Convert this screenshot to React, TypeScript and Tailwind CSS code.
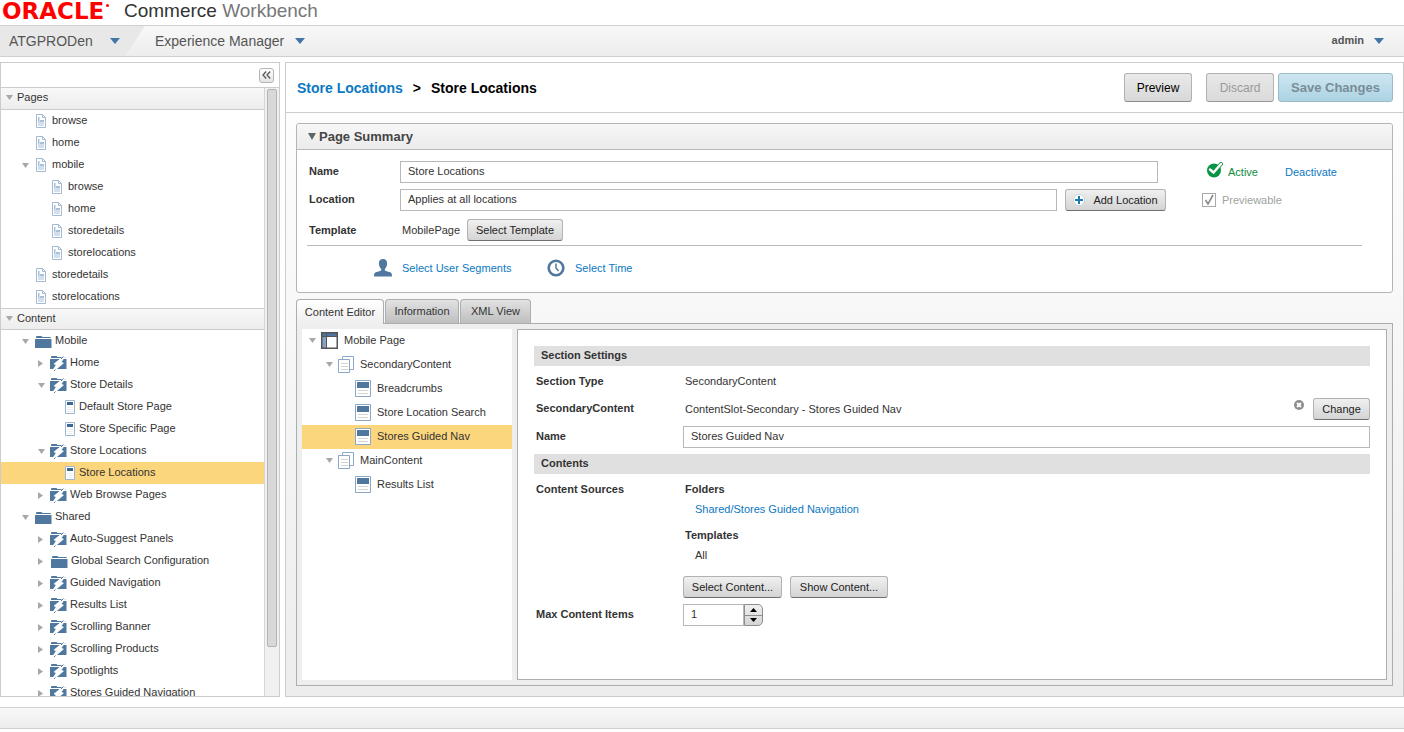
import { useState } from "react";
import type { ReactNode } from "react";
import clsx from "clsx";

type IconName = "page" | "folder" | "bolt" | "leaf" | "layout" | "stack" | "block";

type TreeNode = {
  id: string;
  label: string;
  icon: IconName;
  depth: number;
  arrow?: "open" | "closed";
};

// ===================== DATA =====================
const pages: TreeNode[] = [
  { id: "p1", label: "browse", icon: "page", depth: 1 },
  { id: "p2", label: "home", icon: "page", depth: 1 },
  { id: "p3", label: "mobile", icon: "page", depth: 1, arrow: "open" },
  { id: "p4", label: "browse", icon: "page", depth: 2 },
  { id: "p5", label: "home", icon: "page", depth: 2 },
  { id: "p6", label: "storedetails", icon: "page", depth: 2 },
  { id: "p7", label: "storelocations", icon: "page", depth: 2 },
  { id: "p8", label: "storedetails", icon: "page", depth: 1 },
  { id: "p9", label: "storelocations", icon: "page", depth: 1 },
];

const content: TreeNode[] = [
  { id: "c1", label: "Mobile", icon: "folder", depth: 1, arrow: "open" },
  { id: "c2", label: "Home", icon: "bolt", depth: 2, arrow: "closed" },
  { id: "c3", label: "Store Details", icon: "bolt", depth: 2, arrow: "open" },
  { id: "c4", label: "Default Store Page", icon: "leaf", depth: 3 },
  { id: "c5", label: "Store Specific Page", icon: "leaf", depth: 3 },
  { id: "c6", label: "Store Locations", icon: "bolt", depth: 2, arrow: "open" },
  { id: "c7", label: "Store Locations", icon: "leaf", depth: 3 },
  { id: "c8", label: "Web Browse Pages", icon: "bolt", depth: 2, arrow: "closed" },
  { id: "c9", label: "Shared", icon: "folder", depth: 1, arrow: "open" },
  { id: "c10", label: "Auto-Suggest Panels", icon: "bolt", depth: 2, arrow: "closed" },
  { id: "c11", label: "Global Search Configuration", icon: "folder", depth: 2, arrow: "closed" },
  { id: "c12", label: "Guided Navigation", icon: "bolt", depth: 2, arrow: "closed" },
  { id: "c13", label: "Results List", icon: "bolt", depth: 2, arrow: "closed" },
  { id: "c14", label: "Scrolling Banner", icon: "bolt", depth: 2, arrow: "closed" },
  { id: "c15", label: "Scrolling Products", icon: "bolt", depth: 2, arrow: "closed" },
  { id: "c16", label: "Spotlights", icon: "bolt", depth: 2, arrow: "closed" },
  { id: "c17", label: "Stores Guided Navigation", icon: "bolt", depth: 2, arrow: "closed" },
];

const sections: TreeNode[] = [
  { id: "s1", label: "Mobile Page", icon: "layout", depth: 0, arrow: "open" },
  { id: "s2", label: "SecondaryContent", icon: "stack", depth: 1, arrow: "open" },
  { id: "s3", label: "Breadcrumbs", icon: "block", depth: 2 },
  { id: "s4", label: "Store Location Search", icon: "block", depth: 2 },
  { id: "s5", label: "Stores Guided Nav", icon: "block", depth: 2 },
  { id: "s6", label: "MainContent", icon: "stack", depth: 1, arrow: "open" },
  { id: "s7", label: "Results List", icon: "block", depth: 2 },
];

// ===================== ICONS =====================
function Triangle({ dir = "down", className }: { dir?: "down" | "right" | "up"; className?: string }) {
  return (
    <svg viewBox="0 0 10 6" className={clsx("shrink-0 fill-current", className)} preserveAspectRatio="none">
      {dir === "down" && <path d="M0 0h10L5 6z" />}
      {dir === "up" && <path d="M0 6h10L5 0z" />}
      {dir === "right" && <path d="M0 0v6l10-3z" />}
    </svg>
  );
}

function NodeIcon({ name }: { name: IconName }) {
  switch (name) {
    case "page":
      return (
        <svg width="13" height="14" viewBox="0 0 13 14" className="shrink-0">
          <path d="M1.5.5h6l3 3v10h-9z" fill="#fff" stroke="#a3bbd4" />
          <path d="M7.500.5v3h3" fill="none" stroke="#a3bbd4" />
          <path d="M3 3h2v3h4v6H3z" fill="#d3dfeb" />
          <path d="M3 3h1v5H3zM5 6h4v2H5z" fill="#a9c0d8" />
        </svg>
      );
    case "folder":
      return (
        <svg width="17" height="14" viewBox="0 0 17 14" className="mt-0.5 -mr-px shrink-0" fill="#50789f">
          <path d="M1 3V2q0-1 1-1h4.500l1 1H15q1 0 1 1z" />
          <path d="M0 4h16.500v9H0z" />
        </svg>
      );
    case "bolt":
      return (
        <svg width="17" height="16" viewBox="0 0 17 16" className="-mr-px -ml-px shrink-0" fill="#50789f">
          <path d="M1 3V2q0-1 1-1h4.500l1 1H14l2 1z" />
          <path d="M0 4h16.500v10H0z" />
          <path d="M14 .5 3.500 9l2.300 1L2 16h2.500L14 8l-2.500-1 4-5.500z" fill="#fff" />
          <path d="M13.500 1.500 11 4M5.500 14.500 4 16" fill="none" stroke="#50789f" strokeWidth="1" />
          <path d="M8.500 5.500 10 5 9 8z" fill="#fff" />
        </svg>
      );
    case "leaf":
      return (
        <svg width="10" height="14" viewBox="0 0 10 14" className="shrink-0">
          <path d="M.5.5h9v13h-9z" fill="#fff" stroke="#9db5d0" />
          <path d="M2 2h6v3H2z" fill="#3d6792" />
          <path d="M2 7.500h6M2 9.500h6M2 11.500h6" stroke="#eceff3" />
        </svg>
      );
    case "layout":
      return (
        <svg width="17" height="17" viewBox="0 0 17 17" className="shrink-0">
          <path d="M1 1h15v15H1z" fill="#fff" />
          <path d="M1 1h15v3H1z" fill="#50789f" />
          <path d="M1 5h4v11H1z" fill="#86a3c4" />
          <path d="M1 4.500h15M5.500 1v15" stroke="#555" />
          <path d="M.750.750h15.500v15.500H.750z" fill="none" stroke="#555" strokeWidth="1.500" />
        </svg>
      );
    case "stack":
      return (
        <svg width="16" height="17" viewBox="0 0 16 17" className="shrink-0">
          <path d="M4.500.5h11v13h-11z" fill="#fff" stroke="#8ba8c8" />
          <path d="M.5 3.500h11v13H.5z" fill="#fff" stroke="#8ba8c8" />
          <path d="M3 7.500h7M3 10.500h7M3 13.500h7" stroke="#d3d3d3" />
        </svg>
      );
    case "block":
      return (
        <svg width="16" height="17" viewBox="0 0 16 17" className="shrink-0">
          <path d="M.5.5h15v16H.5z" fill="#fff" stroke="#8ba8c8" />
          <path d="M2 2h12v6H2z" fill="#50789f" />
          <path d="M3 10.500h10M3 13.500h10" stroke="#d3d3d3" />
        </svg>
      );
  }
}

// ===================== SMALL PARTS =====================
function GrayButton({ children, className }: { children: ReactNode; className?: string }) {
  return (
    <button
      type="button"
      className={clsx(
        "flex h-[22px] shrink-0 items-center justify-center rounded-[3px] border border-[#b2b2b2] border-b-[#6f6f6f] bg-linear-to-b from-[#f0f0f0] to-[#d4d4d4] text-[#222]",
        className,
      )}
    >
      {children}
    </button>
  );
}

function SectionHeader({ children, className }: { children: ReactNode; className?: string }) {
  return (
    <button
      type="button"
      className={clsx(
        "flex h-[22px] w-full shrink-0 items-center gap-1 border-b border-[#ccc] bg-linear-to-b from-[#f8f8f8] to-[#ededed] pb-0.5 pl-[5px] text-left",
        className,
      )}
    >
      <Triangle className="h-[5px] w-[7px] text-[#a8a8a8]" />
      {children}
    </button>
  );
}

const sidePad = ["pl-0", "pl-[21px]", "pl-[37px]", "pl-[51px]"];
const editorPad = ["pl-[7px]", "pl-6", "pl-[41px]"];

function Tree({
  nodes,
  selected,
  onSelect,
  wide,
}: {
  nodes: TreeNode[];
  selected: string;
  onSelect: (id: string) => void;
  wide?: boolean;
}) {
  return (
    <ul className="shrink-0">
      {nodes.map((node) => (
        <li key={node.id}>
          <button
            type="button"
            onClick={() => onSelect(node.id)}
            className={clsx(
              "flex w-full items-center whitespace-nowrap text-left",
              wide ? "h-6 pb-0.5" : "h-[22px]",
              wide ? editorPad[node.depth] : sidePad[node.depth],
              selected === node.id && "bg-[#fcd67d]",
            )}
          >
            <span className={clsx("shrink-0 text-[#a8a8a8]", wide ? "w-3" : "w-[13px]")}>
              {node.arrow === "open" && <Triangle className="h-[5px] w-[7px]" />}
              {node.arrow === "closed" && <Triangle dir="right" className="h-[7px] w-[5px]" />}
            </span>
            <NodeIcon name={node.icon} />
            <span className={wide ? "pl-1.5" : "pb-0.5 pl-1"}>{node.label}</span>
          </button>
        </li>
      ))}
    </ul>
  );
}

// ===================== HEADER =====================
function TopBar() {
  return (
    <>
      <header className="flex h-[25px] shrink-0 items-start pl-0.5">
        <span className="flex w-[122px] gap-0.5 font-['DejaVu_Sans',sans-serif] text-[23px] leading-[22px] font-bold text-[#f00]">
          ORACLE
          <i className="mt-1 size-[3px] rounded-full bg-[#f00]" />
        </span>
        <h1 className="text-[19px] leading-[22px] text-[#333]">
          Commerce <span className="text-[#777]">Workbench</span>
        </h1>
      </header>
      <nav className="flex h-8 shrink-0 items-center border-y border-[#d0d0d0] bg-linear-to-b from-[#f8f8f8] to-[#ededed] text-sm text-[#555]">
        <button
          type="button"
          className="flex h-full w-[145px] items-center gap-[17px] bg-[#e8e8e8] pl-[9px] [clip-path:polygon(0_0,100%_0,calc(100%-20px)_100%,0_100%)]"
        >
          ATGPRODen
          <Triangle className="h-1.5 w-2.5 text-[#4475a8]" />
        </button>
        <button type="button" className="flex items-center gap-[11px] pl-[10px]">
          Experience Manager
          <Triangle className="h-1.5 w-2.5 text-[#4475a8]" />
        </button>
        <button type="button" className="ml-auto flex items-center gap-2.5 pr-5 text-[11px] font-bold">
          admin
          <Triangle className="h-1.5 w-2.5 text-[#4475a8]" />
        </button>
      </nav>
    </>
  );
}

// ===================== SIDEBAR =====================
function Sidebar() {
  const [selected, setSelected] = useState("c7");

  return (
    <aside className="flex w-[280px] shrink-0 flex-col border border-[#ccc] bg-white">
      <div className="flex h-[25px] shrink-0 items-center justify-end border-b border-[#ccc] pr-[5px]">
        <button
          type="button"
          aria-label="Collapse"
          className="flex size-[15px] items-center justify-center rounded-[3px] border border-[#b5b5b5] bg-linear-to-b from-white to-[#e4e4e4]"
        >
          <svg width="9" height="8" viewBox="0 0 9 8" fill="none" stroke="#555" strokeWidth="1.300">
            <path d="M4.200.5 1 4l3.200 3.500M8.200.5 5 4l3.200 3.500" />
          </svg>
        </button>
      </div>
      <div className="flex min-h-0 flex-1">
        <div className="flex min-w-0 flex-1 flex-col overflow-hidden">
          <SectionHeader>Pages</SectionHeader>
          <Tree nodes={pages} selected={selected} onSelect={setSelected} />
          <SectionHeader className="border-t">Content</SectionHeader>
          <Tree nodes={content} selected={selected} onSelect={setSelected} />
        </div>
        {/* scroll track */}
        <div className="w-[15px] shrink-0 border-l border-[#d5d5d5] bg-[#f0f0f0] px-0.5 pt-px">
          <div className="h-[92%] rounded-[2px] border border-[#b4b4b4] bg-[#d8d8d8]" />
        </div>
      </div>
    </aside>
  );
}

// ===================== PAGE SUMMARY =====================
const inputClass = "h-[22px] min-w-0 border border-[#b8b8b8] bg-white px-[7px] pb-0.5 text-[#333]";

function PageSummary() {
  return (
    <section className="shrink-0 rounded-[3px] border border-[#b5b5b5] bg-white">
      <h2 className="flex h-[26px] items-center gap-[3px] rounded-t-[3px] border-b border-[#b9b9b9] bg-linear-to-b from-[#f7f7f7] to-[#ebebeb] pl-[11px] text-[13px] font-bold text-[#444]">
        <Triangle className="h-[7px] w-2 text-[#5e6763]" />
        Page Summary
      </h2>
      <div className="pt-[11px] pr-[30px] pb-[15px] pl-2.5">
        <div className="flex gap-9">
          <div className="flex flex-1 flex-col gap-1.5 pl-0.5">
            <div className="flex items-center pr-2">
              <label htmlFor="page-name" className="w-[91px] pb-0.5 font-bold">
                Name
              </label>
              <input id="page-name" defaultValue="Store Locations" className={clsx(inputClass, "flex-1")} />
            </div>
            <div className="flex items-center">
              <label htmlFor="page-location" className="w-[91px] pb-0.5 font-bold">
                Location
              </label>
              <input
                id="page-location"
                defaultValue="Applies at all locations"
                className={clsx(inputClass, "mr-2 flex-1")}
              />
              <GrayButton className="w-[101px] gap-2">
                <svg width="12" height="12" viewBox="0 0 12 12">
                  <circle cx="6" cy="6" r="5.500" fill="#fff" stroke="#c9d3dc" />
                  <path d="M6 2v8M2 6h8" stroke="#1878b8" strokeWidth="2" />
                </svg>
                Add Location
              </GrayButton>
            </div>
          </div>
          <div className="flex w-40 shrink-0 flex-col gap-1.5">
            <div className="flex h-[22px] items-center pl-1">
              <svg width="17" height="16" viewBox="0 0 17 16" className="mb-1 shrink-0">
                <circle cx="8" cy="8.500" r="7" fill="#0c9446" />
                <path d="m4.500 7.500 3 3L15 2" fill="none" stroke="#0c9446" strokeWidth="4" strokeLinecap="round" />
                <path d="m4 7.500 3.500 3L15 2" fill="none" stroke="#fff" strokeWidth="2.400" strokeLinecap="round" />
              </svg>
              <span className="w-[57px] pl-[5px] text-[#0c8d40]">Active</span>
              <a href="#deactivate" className="ml-auto pr-[25px] text-[#0b78c2]">
                Deactivate
              </a>
            </div>
            <div className="flex h-[22px] items-center gap-1.5">
              <span className="relative flex">
                <input
                  id="previewable"
                  type="checkbox"
                  checked
                  disabled
                  className="size-[14px] appearance-none border border-[#a9a9a9] bg-white"
                />
                <svg viewBox="0 0 14 14" className="pointer-events-none absolute inset-0 size-[14px]">
                  <path d="m3.500 7 2.500 4 5-9" fill="none" stroke="#8a8a8a" strokeWidth="1.600" />
                </svg>
              </span>
              <label htmlFor="previewable" className="text-[#9da3a0]">
                Previewable
              </label>
            </div>
          </div>
        </div>
        <div className="flex items-center border-b border-[#b9b9b9] pt-2 pb-1 pl-0.5">
          <span className="w-[93px] font-bold">Template</span>
          <span className="w-[65px]">MobilePage</span>
          <GrayButton className="w-24">Select Template</GrayButton>
        </div>
        <div className="flex items-center pt-[13px] pl-[66px] text-[#0b78c2]">
          <svg width="20" height="18" viewBox="0 0 20 18" className="mr-[9px]" fill="#50789f">
            <path d="M10 0c2.800 0 4.200 1.800 4.100 4.600-.1 2.500-1 4.300-2.300 5.300v1.300c.8.9 2.600 1.200 4.800 1.900 1.700.5 2.400 1.500 2.400 4.400H1c0-2.900.7-3.900 2.400-4.400 2.200-.7 4-1 4.800-1.900V9.900C6.900 8.900 6 7.100 5.900 4.600 5.800 1.800 7.200 0 10 0z" />
          </svg>
          <a href="#segments" className="w-[145px]">
            Select User Segments
          </a>
          <svg width="18" height="18" viewBox="0 0 18 18" className="mr-2.5" fill="none" stroke="#50789f">
            <circle cx="9" cy="9" r="7.300" strokeWidth="2.600" />
            <path d="M9 4.500V9l2.500 3" strokeWidth="1.500" />
          </svg>
          <a href="#time">Select Time</a>
        </div>
      </div>
    </section>
  );
}

// ===================== EDITOR =====================
function SettingsPanel() {
  const [max, setMax] = useState(1);

  return (
    <div className="flex min-w-0 flex-1 flex-col gap-1.5 border border-[#a9afac] bg-white p-4">
      <h3 className="-mb-1.5 flex h-5 shrink-0 items-center bg-[#e0e0e0] pb-0.5 pl-[7px] font-bold">Section Settings</h3>
      <div className="flex h-[26px] items-end pb-[3px] pl-0.5">
        <span className="w-[149px] font-bold">Section Type</span>
        <span>SecondaryContent</span>
      </div>
      <div className="flex h-[22px] items-center pl-0.5">
        <span className="w-[149px] pb-0.5 font-bold">SecondaryContent</span>
        <span className="flex-1">ContentSlot-Secondary - Stores Guided Nav</span>
        <button type="button" aria-label="Clear" className="mr-[9px] mb-2">
          <svg width="10" height="10" viewBox="0 0 10 10">
            <circle cx="5" cy="5" r="5" fill="#8d8d8d" />
            <path d="m3 3 4 4M7 3 3 7" stroke="#fff" strokeWidth="1.800" />
          </svg>
        </button>
        <GrayButton className="w-[57px]">Change</GrayButton>
      </div>
      <div className="flex items-center pl-0.5">
        <label htmlFor="section-name" className="w-[147px] pb-0.5 font-bold">
          Name
        </label>
        <input id="section-name" defaultValue="Stores Guided Nav" className={clsx(inputClass, "flex-1")} />
      </div>
      <h3 className="flex h-5 shrink-0 items-center bg-[#e0e0e0] pb-0.5 pl-[7px] font-bold">Contents</h3>
      <div className="flex pt-0.5 pl-0.5 leading-[14px]">
        <span className="w-[147px] font-bold">Content Sources</span>
        <div>
          <div className="pl-0.5">
            <p className="font-bold">Folders</p>
            <a href="#folder" className="mt-1.5 block pl-2.5 text-[#0b78c2]">
              Shared/Stores Guided Navigation
            </a>
            <p className="mt-3 font-bold">Templates</p>
            <p className="mt-1.5 pl-2.5">All</p>
          </div>
          <div className="mt-3.5 flex gap-2">
            <GrayButton className="w-[99px]">Select Content...</GrayButton>
            <GrayButton className="w-[98px]">Show Content...</GrayButton>
          </div>
        </div>
      </div>
      <div className="flex items-center pl-0.5">
        <label htmlFor="max-items" className="w-[147px] pb-0.5 font-bold">
          Max Content Items
        </label>
        <input
          id="max-items"
          value={max}
          onChange={(e) => setMax(Number(e.target.value) || 0)}
          className={clsx(inputClass, "w-[61px]")}
        />
        <div className="flex h-[22px] w-[19px] flex-col overflow-hidden rounded-r-[5px] border border-[#8e8e8e] bg-linear-to-b from-[#f0f0f0] to-[#d4d4d4] text-black">
          <button
            type="button"
            aria-label="Increase"
            onClick={() => setMax(max + 1)}
            className="flex flex-1 items-center justify-center border-b border-[#8e8e8e]"
          >
            <Triangle dir="up" className="h-1 w-[7px]" />
          </button>
          <button
            type="button"
            aria-label="Decrease"
            onClick={() => setMax(max - 1)}
            className="flex flex-1 items-center justify-center"
          >
            <Triangle className="h-1 w-[7px]" />
          </button>
        </div>
      </div>
    </div>
  );
}

const tabs = [
  { name: "Content Editor", width: "w-[88px]" },
  { name: "Information", width: "w-[74px]" },
  { name: "XML View", width: "w-[71px]" },
];

function Editor() {
  const [tab, setTab] = useState("Content Editor");
  const [selected, setSelected] = useState("s5");

  return (
    <section className="flex min-h-0 flex-1 flex-col">
      <div role="tablist" className="flex gap-px">
        {tabs.map(({ name, width }) => (
          <button
            key={name}
            type="button"
            role="tab"
            aria-selected={tab === name}
            onClick={() => setTab(name)}
            className={clsx(
              "rounded-t-[4px] border border-b-0 border-[#a9afac]",
              width,
              tab === name
                ? "relative -mb-px h-[25px] bg-linear-to-b from-white to-[#eee]"
                : "h-6 bg-linear-to-b from-[#e2e2e2] to-[#bfbfbf]",
            )}
          >
            {name}
          </button>
        ))}
      </div>
      <div className="flex min-h-0 flex-1 gap-[5px] border border-[#a9afac] bg-[#eee] p-[5px]">
        <div className="w-[210px] shrink-0 bg-white">
          <Tree wide nodes={sections} selected={selected} onSelect={setSelected} />
        </div>
        <SettingsPanel />
      </div>
    </section>
  );
}

// ===================== MAIN PAGE =====================
export default function App() {
  return (
    <div className="flex h-screen flex-col bg-white pb-[3px] font-['Liberation_Sans',Arial,sans-serif] text-[11px] text-[#333]">
      <TopBar />
      <div className="mt-[5px] flex min-h-0 flex-1 gap-[5px]">
        <Sidebar />
        <main className="flex min-w-0 flex-1 flex-col border border-[#ccc]">
          <div className="flex h-[50px] shrink-0 items-center border-b border-[#ccc] bg-white pr-2.5 pl-[11px]">
            <p className="text-sm font-bold text-black">
              <a href="#store-locations" className="text-[#0b78c2]">
                Store Locations
              </a>
              <span className="px-2.5">&gt;</span>
              Store Locations
            </p>
            <button
              type="button"
              className="mr-3.5 ml-auto h-[29px] w-[68px] rounded-[3px] border border-[#b2b2b2] border-b-[#8a8a8a] bg-linear-to-b from-[#eaeaea] to-[#d8d8d8] text-xs text-black"
            >
              Preview
            </button>
            <button
              type="button"
              disabled
              className="mr-1 h-[29px] w-[68px] rounded-[3px] border border-[#b2b2b2] border-b-[#999] bg-linear-to-b from-[#e8e8e8] to-[#dadada] text-xs text-[#999]"
            >
              Discard
            </button>
            <button
              type="button"
              disabled
              className="h-[29px] w-[115px] rounded-[3px] border border-[#9eb9c6] bg-linear-to-b from-[#cde6f0] to-[#acd3e4] text-[13px] font-bold text-[#788d97]"
            >
              Save Changes
            </button>
          </div>
          <div className="flex min-h-0 flex-1 flex-col gap-1.5 bg-linear-to-b from-[#fdfdfd] to-[#ededed] p-2.5">
            <PageSummary />
            <Editor />
          </div>
        </main>
      </div>
      <footer className="mt-2.5 h-[22px] shrink-0 border-y border-[#d0d0d0] bg-linear-to-b from-[#f8f8f8] to-[#ededed]" />
    </div>
  );
}
